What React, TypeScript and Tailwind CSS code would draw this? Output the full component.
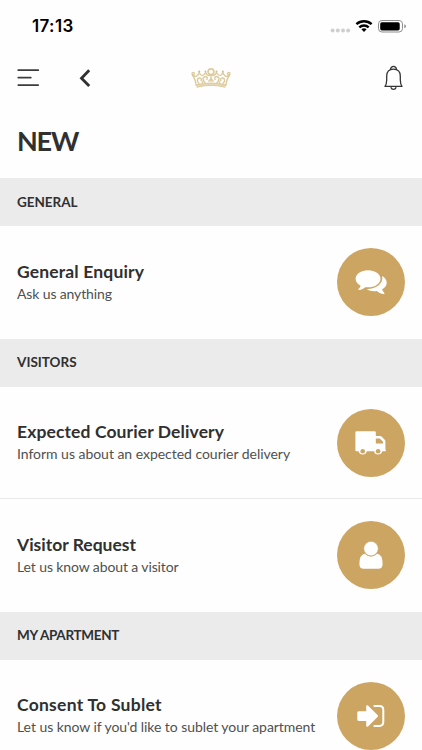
import React from "react";

function StatusBar() {
  return (
    <div className="flex h-[52px] shrink-0 items-center justify-between pl-8 pr-[15px] text-black">
      <span className="pt-px font-['Inter',sans-serif] text-[17px] font-semibold leading-none tracking-[0.35px]">17:13</span>
      <svg width="77" height="20" viewBox="0 0 77 20">
        <g fill="#cfcfcf">
          <circle cx="2.6" cy="14.5" r="2" />
          <circle cx="7.8" cy="14.5" r="2" />
          <circle cx="13" cy="14.5" r="2" />
          <circle cx="18.2" cy="14.5" r="2" />
        </g>
        <g fill="none" stroke="#000" strokeWidth="2.4">
          <path d="M26.4 8.2 A11.2 11.2 0 0 1 41.6 8.2" />
          <path d="M29.3 11.3 A7 7 0 0 1 38.7 11.3" />
        </g>
        <path d="M31.4 13.3 Q34 11.1 36.6 13.3 L34 16Z" />
        <rect x="48.5" y="4.5" width="24" height="11.5" rx="3.4" fill="none" stroke="#8e8e8e" />
        <rect x="50.2" y="6.2" width="19.5" height="8.2" rx="1.7" />
        <path d="M74.3 8.3 Q76 9 76 10.3 T74.3 12.3Z" fill="#8e8e8e" />
      </svg>
    </div>
  );
}

function Crown() {
  return (
    <svg width="40" height="22" viewBox="0 0 40 22" fill="none" stroke="#dccb9c" strokeWidth="1.4" strokeLinecap="round">
      <path d="M5.2 17.6 Q20 13.8 34.8 17.6 L34 20.4 Q20 16.8 6 20.4Z" fill="#e6d9b6" stroke="none" />
      <path d="M5.2 17.9 Q20 14.2 34.8 17.9 M6 20.1 Q20 16.5 34 20.1" strokeWidth="1" />
      <path d="M5.2 18.5 Q4.2 11.5 1.4 8.2 M34.8 18.5 Q35.8 11.5 38.6 8.2" />
      <circle cx="2.2" cy="6.6" r="1.2" />
      <circle cx="37.8" cy="6.6" r="1.2" />
      <circle cx="20" cy="4.8" r="2.9" strokeWidth="1.7" />
      <path d="M2.6 8.6 Q5.8 11 8.2 5.6 Q10.8 11.7 14.6 5.5 Q16 9.8 20 7.8 Q24 9.8 25.4 5.5 Q29.2 11.7 31.8 5.6 Q34.2 11 37.4 8.6" />
      <path d="M8 16.5 Q4.6 12.6 8 11 Q11 10.8 10.2 13.7 M14 15.6 Q9.8 10.7 14.2 9.5 Q17.5 9.8 15.8 12.5 M32 16.5 Q35.4 12.6 32 11 Q29 10.8 29.8 13.7 M26 15.6 Q30.2 10.7 25.8 9.5 Q22.5 9.8 24.2 12.5" />
      <path d="M20 8.5 V14.5 M17.8 14.2 L20 11.3 L22.2 14.2 M11.2 16 L12.5 13.5 M28.8 16 L27.5 13.5" />
      <g fill="#d3bd83" stroke="none">
        <circle cx="8.2" cy="4.6" r="1" />
        <circle cx="14.5" cy="4.4" r=".9" />
        <circle cx="25.5" cy="4.4" r=".9" />
        <circle cx="31.8" cy="4.6" r="1" />
      </g>
    </svg>
  );
}

function NavBar() {
  return (
    <div className="flex h-[52px] shrink-0 items-center pl-[17px] pr-[19px]">
      <svg width="23" height="20" viewBox="0 0 23 20" fill="none" stroke="#3c3c3c" strokeWidth="1.8" strokeLinecap="round">
        <path d="M1.3 2.2H21.2M1.3 9.6H13.8M1.3 17.1H21.2" />
      </svg>
      <svg className="ml-[38px]" width="14" height="20" viewBox="0 0 14 20" fill="none" stroke="#303030" strokeWidth="2.8">
        <path d="M11.2 2.3L3.5 10.2L11.2 18.1" />
      </svg>
      <div className="ml-[99px] flex-1"><Crown /></div>
      <svg width="19" height="26" viewBox="0 0 19 26" fill="none" stroke="#343434" strokeWidth="1.3" strokeLinejoin="round">
        <path d="M1 21.4Q2.6 19.5 2.7 15V11Q2.8 4.1 9.5 4.1Q16.2 4.1 16.3 11V15Q16.4 19.5 18 21.4Z" />
        <path d="M6.4 4.5Q7 1.4 9.5 1.4T12.6 4.5M6.8 22.2Q7.5 24.4 9.5 24.4T12.2 22.2" />
      </svg>
    </div>
  );
}

function ChatIcon() {
  return (
    <svg width="34" height="28" viewBox="0 0 34 28" fill="#fff">
      <path d="M14 2.3C7 2.3 1.6 6 1.6 10.8C1.6 13.7 3.5 16.1 6.6 17.7C6.2 19.2 5.3 20.3 4.3 21.3Q4 22.2 5 22.1C7.5 21.7 9.7 20.7 11.2 19.2C20 20.2 26.5 16.3 26.5 10.8C26.5 6 21 2.3 14 2.3Z" />
      <path d="M28.1 8.1C31 9.7 32.7 12.1 32.7 14.7C32.7 17.5 31 19.8 28.1 21.3C28.5 22.8 29.3 24 30.3 25Q31 26.3 29.6 26.1C26.9 25.7 24.4 24.4 22.8 23C18.7 23.6 15.4 22.8 12.7 21.2C22.6 21.1 29.7 15.5 28.1 8.1Z" />
    </svg>
  );
}

function TruckIcon() {
  return (
    <svg width="34" height="28" viewBox="0 0 34 28" fill="#fff">
      <path fillRule="evenodd" d="M2.6 2.2H20.6Q21.8 2.2 21.8 3.4V7H26Q27.1 7 28 7.9L30.5 10.6Q31.4 11.5 31.4 12.7V20.7Q32 20.8 32 21.5Q32 22.3 31.2 22.3H28.2A4.2 4.2 0 0 1 20 22.3H12.8A4.2 4.2 0 0 1 4.6 22.3H2.1Q1.4 22.3 1.4 21.5V3.4Q1.4 2.2 2.6 2.2ZM21.8 9.4V14.4H29V12.8L25.8 9.4Z" />
      <g fill="#cca563"><circle cx="8.7" cy="22.3" r="2.3" /><circle cx="24.1" cy="22.3" r="2.3" /></g>
    </svg>
  );
}

function UserIcon() {
  return (
    <svg width="34" height="30" viewBox="0 0 34 30" fill="#fff">
      <path d="M10.7 13.7Q5.4 14.5 5.4 23.9Q5.4 28.8 9.8 28.8H24.2Q28.6 28.8 28.6 23.9Q28.6 14.5 23.3 13.7Q17 19.3 10.7 13.7Z" />
      <circle cx="17" cy="8.6" r="7.3" stroke="#cca563" strokeWidth=".7" />
    </svg>
  );
}

function SignInIcon() {
  return (
    <svg width="34" height="28" viewBox="0 0 34 28" fill="#fff">
      <path d="M4.6 9.3H12.2V4.5Q12.3 2.5 14 3.6L23.5 12.9Q24.5 14 23.5 15.1L14 24.4Q12.3 25.5 12.2 23.5V18.9H4.6Q3.3 18.9 3.3 17.6V10.6Q3.3 9.3 4.6 9.3Z" />
      <path d="M20.4 4.1H25.5Q29.3 4.1 29.3 7.9V20.1Q29.3 23.9 25.5 23.9H20.4" fill="none" stroke="#fff" strokeWidth="2" strokeLinecap="round" />
    </svg>
  );
}

function Section({ children, className }: { children: React.ReactNode; className: string }) {
  return (
    <h2 className={`flex h-12 shrink-0 items-center bg-[#ebebeb] pb-px pl-[17px] text-[13.5px] font-bold leading-5 ${className}`}>
      {children}
    </h2>
  );
}

type RowProps = { title: string; detail: string; icon: React.ReactNode; titleClass: string; detailClass: string };

function Row({ title, detail, icon, titleClass, detailClass }: RowProps) {
  return (
    <div className="flex h-[112.5px] shrink-0 items-center justify-between px-[17px]">
      <div className="whitespace-nowrap pb-px">
        <h3 className={`text-[17.5px] font-bold leading-6 ${titleClass}`}>{title}</h3>
        <p className={`-mt-px text-[14px] leading-[21px] text-[#505050] ${detailClass}`}>{detail}</p>
      </div>
      <div className="flex size-[68px] shrink-0 items-center justify-center rounded-full bg-[#cca563]">{icon}</div>
    </div>
  );
}

export default function App() {
  return (
    <main className="flex h-[750px] w-[422px] flex-col overflow-hidden bg-[#fefefe] font-['Lato','Liberation_Sans',sans-serif] text-[#303030]">
      <StatusBar />
      <NavBar />
      <div className="flex h-[74px] shrink-0 items-center pl-[17px]">
        <h1 className="text-[27px] font-bold leading-9 tracking-[-1.2px]">NEW</h1>
      </div>
      <Section className="tracking-[-0.05px]">GENERAL</Section>
      <Row title="General Enquiry" detail="Ask us anything" icon={<ChatIcon />} titleClass="tracking-[0.15px]" detailClass="tracking-[-0.13px]" />
      <Section className="tracking-[0px]">VISITORS</Section>
      <Row title="Expected Courier Delivery" detail="Inform us about an expected courier delivery" icon={<TruckIcon />} titleClass="tracking-[0.11px]" detailClass="tracking-[-0.03px]" />
      <div className="-mt-px h-px shrink-0 bg-[#e9e9e9]" />
      <Row title="Visitor Request" detail="Let us know about a visitor" icon={<UserIcon />} titleClass="tracking-[0px]" detailClass="tracking-[-0.11px]" />
      <Section className="tracking-[-0.3px]">MY APARTMENT</Section>
      <Row title="Consent To Sublet" detail="Let us know if you'd like to sublet your apartment" icon={<SignInIcon />} titleClass="tracking-[0.26px]" detailClass="tracking-[-0.06px]" />
    </main>
  );
}
